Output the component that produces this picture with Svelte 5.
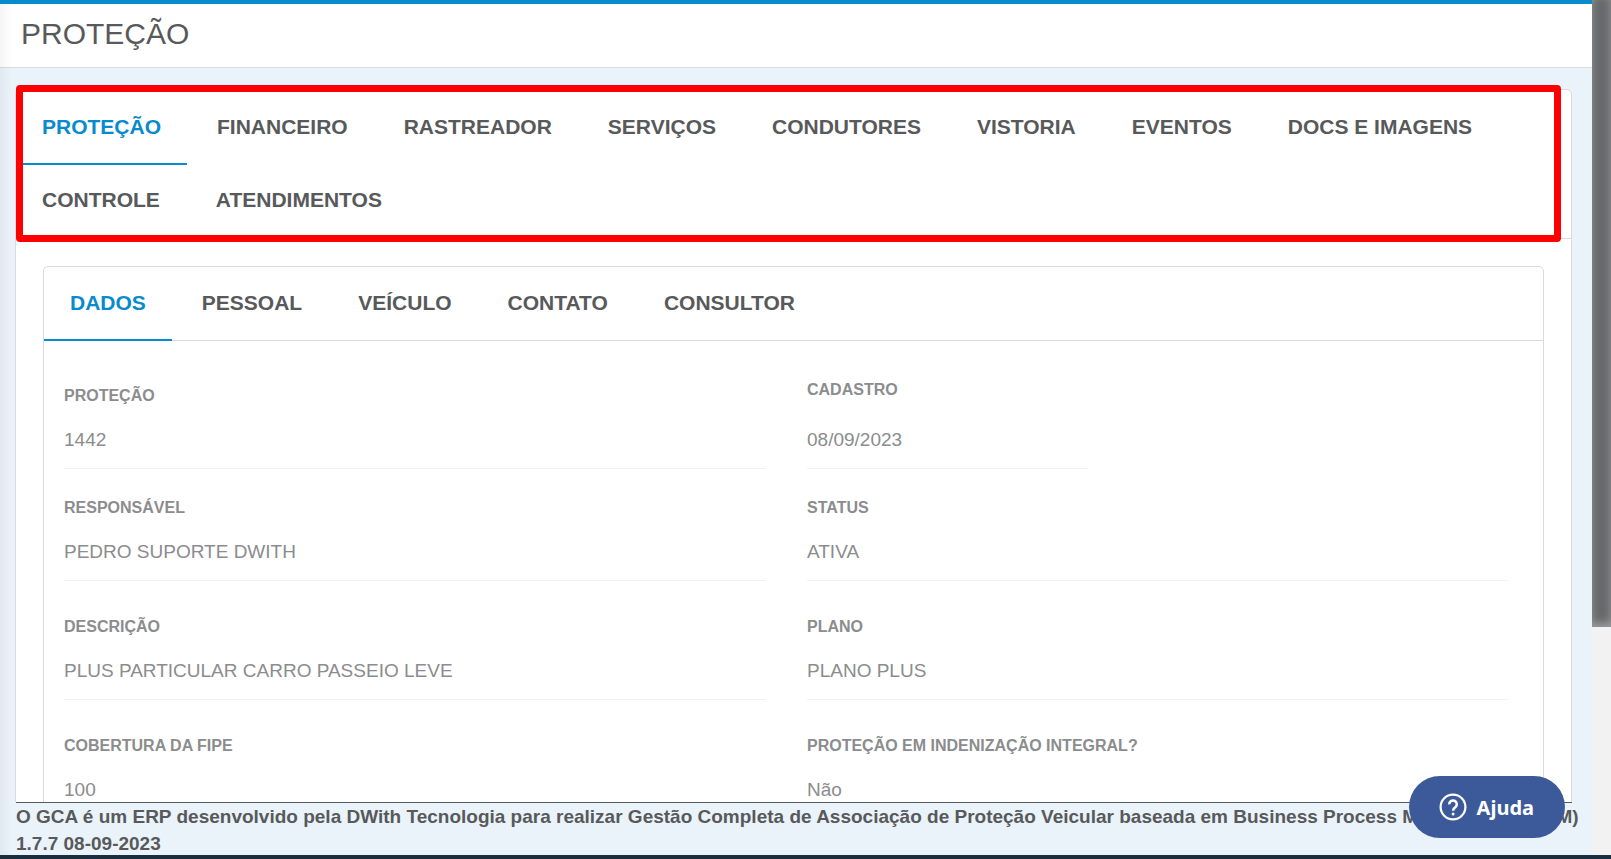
<script lang="ts">
  interface Field {
    id: string;
    label: string;
    value: string;
    short?: boolean;
  }

  const mainTabs: string[] = [
    'Proteção',
    'Financeiro',
    'Rastreador',
    'Serviços',
    'Condutores',
    'Vistoria',
    'Eventos',
    'Docs e Imagens',
    'Controle',
    'Atendimentos'
  ];

  const subTabs: string[] = ['Dados', 'Pessoal', 'Veículo', 'Contato', 'Consultor'];

  const rows: Field[][] = [
    [
      { id: 'protecao', label: 'Proteção', value: '1442' },
      { id: 'cadastro', label: 'Cadastro', value: '08/09/2023', short: true }
    ],
    [
      { id: 'responsavel', label: 'Responsável', value: 'PEDRO SUPORTE DWITH' },
      { id: 'status', label: 'Status', value: 'ATIVA' }
    ],
    [
      { id: 'descricao', label: 'Descrição', value: 'PLUS PARTICULAR CARRO PASSEIO LEVE' },
      { id: 'plano', label: 'Plano', value: 'PLANO PLUS' }
    ],
    [
      { id: 'cobertura', label: 'Cobertura da FIPE', value: '100' },
      { id: 'indenizacao', label: 'Proteção em indenização integral?', value: 'Não' }
    ]
  ];

  let activeMain = 0;
  let activeSub = 0;
</script>

<div class="app">
  <div class="window">
    <div class="page">
      <header class="page-header">
        <h1>PROTEÇÃO</h1>
      </header>

      <main class="content">
        <section class="panel">
          <nav class="tabs main-tabs">
            {#each mainTabs as tab, index}
              <button
                type="button"
                class="tab"
                class:active={activeMain === index}
                on:click={() => (activeMain = index)}
              >{tab}</button>
            {/each}
            <div class="highlight"></div>
          </nav>

          <div class="panel-body">
            <div class="card">
              <nav class="tabs">
                {#each subTabs as tab, index}
                  <button
                    type="button"
                    class="tab"
                    class:active={activeSub === index}
                    on:click={() => (activeSub = index)}
                  >{tab}</button>
                {/each}
              </nav>

              <form class="fields">
                {#each rows as row}
                  <div class="row">
                    {#each row as field}
                      <div class="field" class:short={field.short}>
                        <label for={field.id}>{field.label}</label>
                        <input id={field.id} type="text" value={field.value} readonly />
                      </div>
                    {/each}
                  </div>
                {/each}
              </form>
            </div>
          </div>
        </section>
      </main>

      <footer class="page-footer">
        <div>O GCA é um ERP desenvolvido pela DWith Tecnologia para realizar Gestão Completa de Associação de Proteção Veicular baseada em Business Process Management (BPM)</div>
        <div>1.7.7 08-09-2023</div>
      </footer>

      <button type="button" class="help">
        <svg viewBox="0 0 28 28" width="28" height="28" fill="none" stroke="#fff" aria-hidden="true">
          <circle cx="14" cy="14" r="12.4" stroke-width="2.2" />
          <path d="M10.2 11.4a3.8 3.8 0 1 1 6.3 2.7c-1.4 1.2-2.4 1.7-2.4 3.7" stroke-width="2.5" />
          <circle cx="14.1" cy="21" r="1.5" fill="#fff" stroke="none" />
        </svg>
        <span>Ajuda</span>
      </button>
    </div>

    <div class="scrollbar">
      <div class="thumb"></div>
    </div>
  </div>
  <div class="bottom-bar"></div>
</div>

<style>
  :global(body) {
    margin: 0;
    overflow: hidden;
  }

  .app {
    display: flex;
    flex-direction: column;
    height: 100vh;
    font-family: 'Liberation Sans', Arial, sans-serif;
    color: #58595b;
  }

  .window {
    flex: 1;
    display: flex;
    min-height: 0;
  }

  .page {
    flex: 1;
    min-width: 0;
    display: flex;
    flex-direction: column;
    position: relative;
    background: #eaf3fa;
  }

  .page::before {
    content: '';
    position: absolute;
    top: 4px;
    bottom: 0;
    left: 0;
    width: 12px;
    background: linear-gradient(to right, rgba(0, 0, 0, 0.04), transparent);
  }

  /* Header */
  .page-header {
    border-top: 4px solid #088acf;
    border-bottom: 1px solid #dadbdc;
    background: #fff;
    padding: 12px 21px 15px;
  }

  h1 {
    margin: 0;
    font-size: 30px;
    font-weight: 400;
    line-height: 36px;
  }

  /* Panel */
  .content {
    flex: 1;
    min-height: 0;
    overflow: hidden;
    padding: 21px 20px 0 15px;
  }

  .panel,
  .card {
    border: 1px solid #dadbdc;
    border-radius: 5px;
    background: #fff;
  }

  .panel-body {
    padding: 27px;
  }

  /* Tabs */
  .tabs {
    display: flex;
    flex-wrap: wrap;
    column-gap: 4px;
    border-bottom: 1px solid #dadbdc;
  }

  .main-tabs {
    position: relative;
    padding: 1px 0;
  }

  .tab {
    margin: 0 0 -1px;
    padding: 24px 26px;
    border: 0;
    border-bottom: 2px solid transparent;
    background: none;
    color: inherit;
    font: bold 21px/24px 'Liberation Sans', Arial, sans-serif;
    text-transform: uppercase;
    cursor: pointer;
  }

  .tab.active {
    color: #088acf;
    border-bottom-color: #088acf;
  }

  .highlight {
    position: absolute;
    top: -5px;
    right: 10px;
    bottom: -4px;
    left: 0;
    border: 7px solid #f00;
    border-radius: 4px;
    pointer-events: none;
  }

  /* Fields */
  .fields {
    padding: 45px 34px 36px 20px;
  }

  .row {
    display: grid;
    grid-template-columns: 1fr 1fr;
    align-items: end;
    column-gap: 41px;
    margin-bottom: 36px;
  }

  .row:first-child {
    margin-bottom: 29px;
  }

  .field {
    display: flex;
    flex-direction: column;
    gap: 5px;
    color: #8b8c8e;
  }

  .field.short {
    gap: 11px;
    margin-top: -6px;
  }

  .field.short input {
    width: 40%;
  }

  label {
    font-size: 16px;
    font-weight: 700;
    line-height: 20px;
    text-transform: uppercase;
  }

  input {
    box-sizing: border-box;
    width: 100%;
    height: 58px;
    padding: 0;
    border: 0;
    border-bottom: 1px solid #f1f2f2;
    outline: 0;
    background: none;
    color: inherit;
    font: 19px 'Liberation Sans', Arial, sans-serif;
  }

  /* Footer */
  .page-footer {
    box-sizing: border-box;
    height: 53px;
    margin: 0 20px 0 16px;
    border-top: 1px solid #54585b;
    font-size: 19px;
    font-weight: 700;
    line-height: 27px;
  }

  .page-footer div {
    white-space: nowrap;
  }

  .help {
    position: absolute;
    right: 27px;
    bottom: 17px;
    display: flex;
    align-items: center;
    gap: 10px;
    height: 62px;
    padding: 0 31px 0 30px;
    border: 0;
    border-radius: 31px;
    background: #3c5a99;
    color: #fff;
    font: bold 20px 'Noto Sans', sans-serif;
    cursor: pointer;
  }

  .scrollbar {
    width: 19px;
    background: #f2f2f2;
  }

  .thumb {
    height: 73.3%;
    background: #66696a;
    box-shadow: inset 0 -4px 8px #9a9c9d;
  }

  .bottom-bar {
    height: 4px;
    background: #1b2e3f;
  }
</style>
